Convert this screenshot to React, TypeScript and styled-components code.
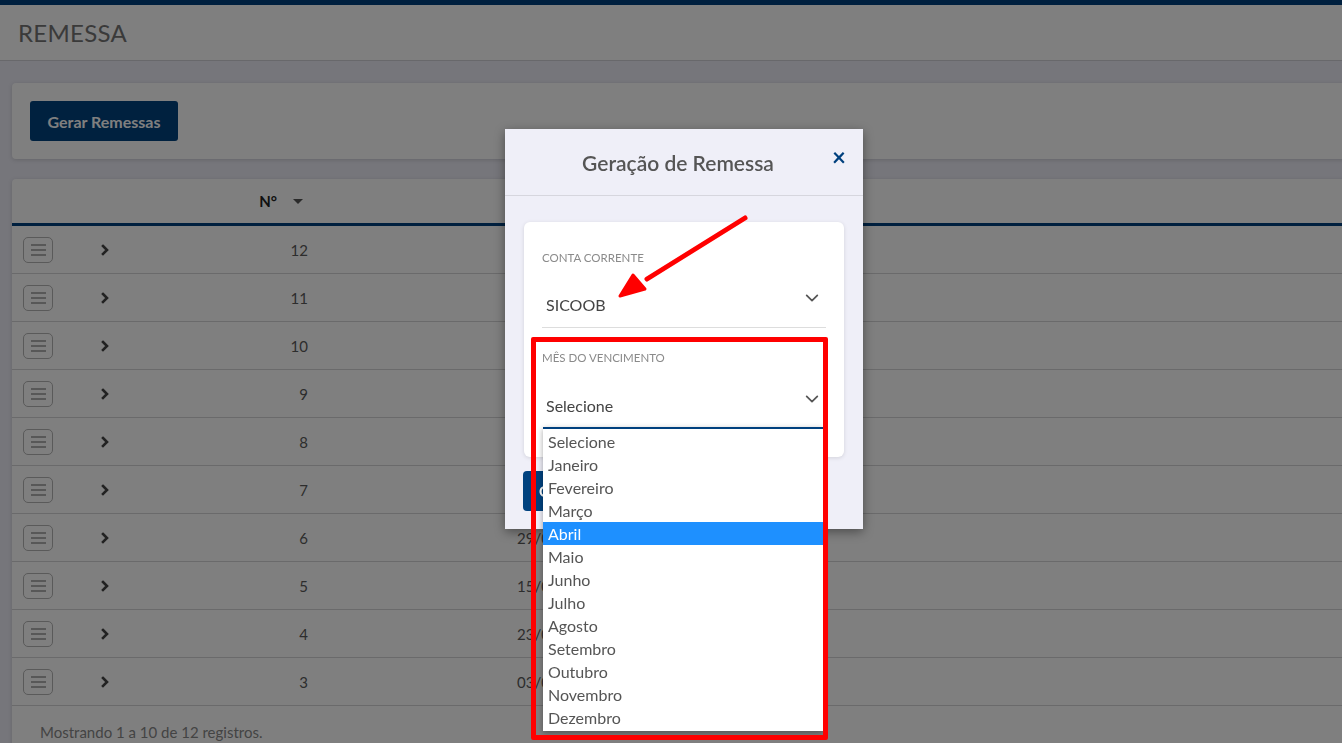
import styled, { createGlobalStyle } from 'styled-components';

const GlobalStyle = createGlobalStyle`
  html, body {
    margin: 0;
    padding: 0;
    background: #ececf6;
    font-family: Lato, "Open Sans", sans-serif;
    overflow: hidden;
  }
`;

type Row = { id: number; date: string };

const rows: Row[] = [
  { id: 12, date: '' },
  { id: 11, date: '' },
  { id: 10, date: '' },
  { id: 9, date: '' },
  { id: 8, date: '' },
  { id: 7, date: '' },
  { id: 6, date: '29/03/2021' },
  { id: 5, date: '15/03/2021' },
  { id: 4, date: '23/02/2021' },
  { id: 3, date: '03/02/2021' },
];

const months = [
  'Selecione',
  'Janeiro',
  'Fevereiro',
  'Março',
  'Abril',
  'Maio',
  'Junho',
  'Julho',
  'Agosto',
  'Setembro',
  'Outubro',
  'Novembro',
  'Dezembro',
];

function Chevron() {
  return (
    <svg width="16" height="16" viewBox="0 0 24 24" fill="none" stroke="#555" strokeWidth="2.6" strokeLinecap="round" strokeLinejoin="round">
      <path d="M4 8l8 8 8-8" />
    </svg>
  );
}

function RightChevron() {
  return (
    <svg width="10" height="12" viewBox="0 0 10 12" fill="none" stroke="#444" strokeWidth="2.6" strokeLinecap="square">
      <path d="M3 2l4 4-4 4" />
    </svg>
  );
}

export default function App() {
  return (
    <>
      <GlobalStyle />
      <Page>
        <TopBar />
        <Header>
          <Title>REMESSA</Title>
        </Header>
        <Content>
          <ActionCard>
            <PrimaryButton>Gerar Remessas</PrimaryButton>
          </ActionCard>
          <TableCard>
            <TableHead>
              <MenuCol />
              <ArrowCol />
              <NumCol $head>
                N°
                <Caret />
              </NumCol>
            </TableHead>
            {rows.map(row => (
              <TableRow key={row.id}>
                <MenuCol>
                  <MenuButton>
                    <span />
                    <span />
                    <span />
                  </MenuButton>
                </MenuCol>
                <ArrowCol>
                  <RightChevron />
                </ArrowCol>
                <NumCol>{row.id}</NumCol>
                <DateCol>{row.date}</DateCol>
              </TableRow>
            ))}
            <Footer>Mostrando 1 a 10 de 12 registros.</Footer>
          </TableCard>
        </Content>
      </Page>
      <Overlay />
      <Modal>
        <ModalHeader>
          <ModalTitle>Geração de Remessa</ModalTitle>
          <Close>×</Close>
        </ModalHeader>
        <ModalBody>
          <FormCard>
            <Field>
              <Label>CONTA CORRENTE</Label>
              <Select $underline>
                SICOOB
                <Chevron />
              </Select>
            </Field>
            <Field>
              <Label>MÊS DO VENCIMENTO</Label>
              <SelectWrap>
                <Select>
                  Selecione
                  <Chevron />
                </Select>
                <Options>
                  {months.map(m => (
                    <Option key={m} $active={m === 'Abril'}>
                      {m}
                    </Option>
                  ))}
                </Options>
              </SelectWrap>
            </Field>
          </FormCard>
          <ModalButton>Gerar</ModalButton>
        </ModalBody>
      </Modal>
      <Highlight />
      <Arrow width="140" height="100" viewBox="0 0 140 100">
        <line x1="128" y1="6" x2="30" y2="67" stroke="#ff0000" strokeWidth="5" strokeLinecap="round" />
        <polygon points="3,84 16,63 28,77" fill="#ff0000" stroke="#ff0000" strokeWidth="3" strokeLinejoin="round" />
      </Arrow>
    </>
  );
}

const Page = styled.div`
  min-height: 743px;
`;

const TopBar = styled.div`
  height: 5px;
  background: #00407e;
`;

const Header = styled.div`
  height: 55px;
  background: #fefefe;
  border-bottom: 1px solid #d0d0d6;
  display: flex;
  align-items: center;
  padding-left: 18px;
`;

const Title = styled.h1`
  margin: 0;
  font-weight: 400;
  font-size: 24px;
  letter-spacing: 0.3px;
  color: #747474;
`;

const Content = styled.div`
  display: grid;
  gap: 20px;
  padding: 22px 0 0 12px;
  margin-right: -20px;
`;

const ActionCard = styled.div`
  background: #fff;
  border-radius: 4px;
  box-shadow: 0 1px 4px rgba(0, 0, 0, 0.15);
  padding: 18px;
  height: 40px;
`;

const PrimaryButton = styled.button`
  background: #00427f;
  color: #fff;
  border: none;
  border-radius: 3px;
  height: 40px;
  width: 148px;
  font-family: Lato, sans-serif;
  font-weight: 700;
  font-size: 16px;
`;

const TableCard = styled.div`
  background: #fff;
  border-radius: 4px 4px 0 0;
  box-shadow: 0 1px 4px rgba(0, 0, 0, 0.15);
`;

const TableHead = styled.div`
  display: flex;
  align-items: center;
  height: 44px;
  border-bottom: 3px solid #00407e;
`;

const TableRow = styled.div`
  display: flex;
  align-items: center;
  height: 47px;
  border-bottom: 1px solid #d4d4d6;
  color: #5a5a5a;
  font-size: 15px;
`;

const MenuCol = styled.div`
  width: 70px;
  padding-left: 11px;
  box-sizing: border-box;
`;

const ArrowCol = styled.div`
  width: 60px;
  padding-left: 18px;
  display: flex;
  align-items: center;
  box-sizing: border-box;
`;

const NumCol = styled.div<{ $head?: boolean }>`
  width: 166px;
  display: flex;
  align-items: center;
  justify-content: flex-end;
  gap: 16px;
  font-weight: ${p => (p.$head ? 700 : 400)};
  color: ${p => (p.$head ? '#222' : '#5a5a5a')};
  font-size: 15px;
  padding-right: ${p => (p.$head ? '5px' : '0')};
  box-sizing: border-box;
  margin-right: ${p => (p.$head ? '0' : '21px')};
`;

const Caret = styled.span`
  width: 0;
  height: 0;
  border-left: 5px solid transparent;
  border-right: 5px solid transparent;
  border-top: 5px solid #555;
`;

const DateCol = styled.div`
  margin-left: 188px;
  white-space: nowrap;
`;

const MenuButton = styled.div`
  width: 30px;
  height: 26px;
  box-sizing: border-box;
  border: 1px solid #b4b4b4;
  border-radius: 5px;
  display: flex;
  flex-direction: column;
  justify-content: center;
  align-items: center;
  gap: 3px;

  span {
    width: 15px;
    height: 2px;
    background: #b0b0b0;
  }
`;

const Footer = styled.div`
  padding: 17px 0 0 28px;
  height: 40px;
  font-size: 15px;
  color: #888;
`;

const Overlay = styled.div`
  position: fixed;
  inset: 0;
  background: rgba(0, 0, 0, 0.5);
`;

const Modal = styled.div`
  position: fixed;
  left: 505px;
  top: 129px;
  width: 358px;
  height: 400px;
  background: #efeff8;
  box-shadow: 0 3px 10px rgba(0, 0, 0, 0.4);
  display: flex;
  flex-direction: column;
`;

const ModalHeader = styled.div`
  height: 66px;
  border-bottom: 1px solid #d6d6de;
  display: flex;
  align-items: center;
  justify-content: center;
  position: relative;
`;

const ModalTitle = styled.h2`
  margin: 0;
  font-size: 21px;
  font-weight: 600;
  color: #555;
  padding-right: 12px;
`;

const Close = styled.span`
  position: absolute;
  right: 17px;
  top: 13px;
  font-size: 24px;
  font-weight: 700;
  color: #00407e;
`;

const ModalBody = styled.div`
  padding: 26px 19px 0 19px;
  display: flex;
  flex-direction: column;
  gap: 14px;
`;

const FormCard = styled.div`
  background: #fff;
  border-radius: 6px;
  box-shadow: 0 1px 4px rgba(0, 0, 0, 0.12);
  padding: 28px 18px 0 18px;
  height: 207px;
`;

const Field = styled.div`
  display: flex;
  flex-direction: column;
`;

const Label = styled.label`
  font-size: 11.5px;
  line-height: 16px;
  color: #8a8a8a;
  height: 16px;
`;

const SelectWrap = styled.div`
  position: relative;
`;

const Select = styled.div<{ $underline?: boolean }>`
  height: 62px;
  display: flex;
  align-items: flex-end;
  justify-content: space-between;
  padding: 0 6px 13px 4px;
  box-sizing: border-box;
  font-size: 16px;
  color: #444;
  border-bottom: ${p => (p.$underline ? '1px solid #ddd' : 'none')};
  margin-bottom: ${p => (p.$underline ? '22px' : '0')};

  svg {
    margin-bottom: 8px;
  }
`;

const Options = styled.ul`
  position: absolute;
  left: 1px;
  top: 61px;
  width: 280px;
  margin: 0;
  padding: 1px 0 2px;
  list-style: none;
  background: #fff;
  border-top: 2px solid #00407e;
  box-shadow: 0 2px 6px rgba(0, 0, 0, 0.35);
  z-index: 5;
`;

const Option = styled.li<{ $active?: boolean }>`
  height: 23px;
  line-height: 23px;
  padding-left: 5px;
  font-size: 16px;
  color: ${p => (p.$active ? '#fff' : '#555')};
  background: ${p => (p.$active ? '#1e90ff' : 'transparent')};
`;

const ModalButton = styled.button`
  align-self: flex-start;
  background: #00427f;
  color: #fff;
  border: none;
  border-radius: 4px;
  height: 40px;
  width: 120px;
  margin-left: -1px;
  font-family: Lato, sans-serif;
  font-size: 15px;
  font-weight: 700;
  text-align: left;
  padding-left: 16px;
`;

const Highlight = styled.div`
  position: fixed;
  left: 531px;
  top: 337px;
  width: 297px;
  height: 403px;
  box-sizing: border-box;
  border: 5px solid #ff0000;
  border-radius: 2px;
  pointer-events: none;
`;

const Arrow = styled.svg`
  position: fixed;
  left: 617px;
  top: 212px;
`;
